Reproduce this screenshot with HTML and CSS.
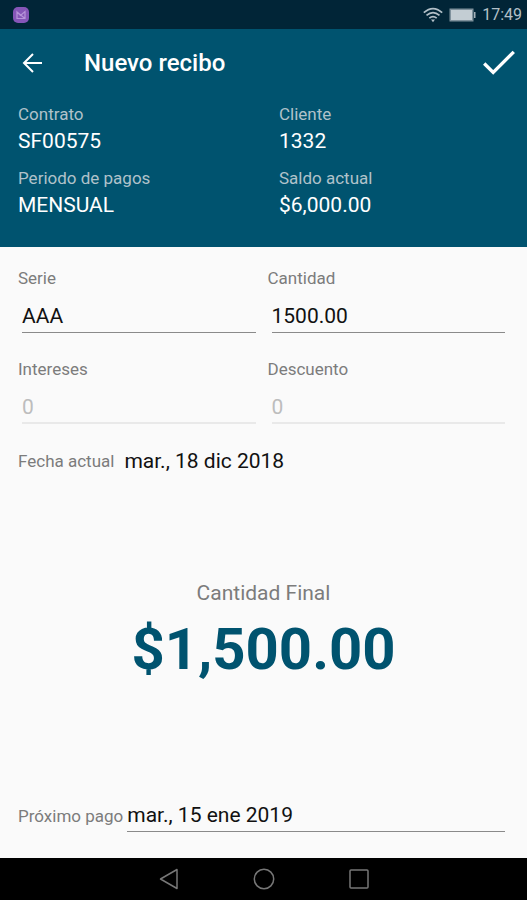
FILE: index.html
```html
<!DOCTYPE html>
<html lang="es">
<head>
<meta charset="utf-8">
<meta name="viewport" content="width=device-width, initial-scale=1">
<title>Nuevo recibo</title>
<link rel="stylesheet" href="styles.css">
</head>
<body>
<div class="status-bar">
  <svg class="status-app" width="16" height="16" viewBox="0 0 16 16" aria-hidden="true">
    <rect width="16" height="16" rx="5" fill="#8656b8"/>
    <path d="M4 11.500V5l3.500 3.500L12 4.500v7zM4 5l8 6.500" fill="none" stroke="#b794da" stroke-width="1.200"/>
  </svg>
  <div class="status-info">
    <svg width="20" height="16" viewBox="0 0 20 16" fill="none" stroke="#b3c0c8" stroke-width="1.700" aria-hidden="true">
      <path d="M.8 5.600Q10-2.500 19.200 5.600M3.500 8.400Q10 2.800 16.500 8.400M6.300 11.100Q10 8 13.700 11.100"/>
      <path d="M8 12.500h4l-2 2.700z" fill="#b3c0c8" stroke="none"/>
    </svg>
    <svg width="27" height="14" viewBox="0 0 27 14" aria-hidden="true">
      <rect x=".5" y=".5" width="24" height="13" fill="#7f919c"/>
      <rect x="2" y="2" width="21" height="10" fill="#c3cdd3"/>
      <rect x="25" y="4" width="1.500" height="6" fill="#a4b1ba"/>
    </svg>
    <time class="clock">17:49</time>
  </div>
</div>
<header class="header">
  <div class="app-bar">
    <button class="icon-button" type="button" aria-label="Volver">
      <svg width="20" height="20" viewBox="0 0 20 20" fill="none" stroke="#fff" stroke-width="2" aria-hidden="true">
        <path d="M20 10H2M11 1L2 10l9 9"/>
      </svg>
    </button>
    <h1 class="title">Nuevo recibo</h1>
    <button class="icon-button" type="submit" form="receipt" aria-label="Guardar">
      <svg width="32" height="26" viewBox="0 0 32 26" fill="none" stroke="#fff" stroke-width="3.300" aria-hidden="true">
        <path d="M1.200 13.500l9 9L30.800 1.800"/>
      </svg>
    </button>
  </div>
  <dl class="summary">
    <div><dt>Contrato</dt><dd>SF00575</dd></div>
    <div><dt>Cliente</dt><dd>1332</dd></div>
    <div><dt>Periodo de pagos</dt><dd>MENSUAL</dd></div>
    <div><dt>Saldo actual</dt><dd>$6,000.00</dd></div>
  </dl>
</header>
<form class="form" id="receipt">
  <div class="fields">
    <div class="field"><label for="serie">Serie</label><input id="serie" type="text" value="AAA"></div>
    <div class="field"><label for="cantidad">Cantidad</label><input id="cantidad" type="text" inputmode="decimal" value="1500.00"></div>
    <div class="field"><label for="intereses">Intereses</label><input id="intereses" type="text" value="0" disabled></div>
    <div class="field"><label for="descuento">Descuento</label><input id="descuento" type="text" value="0" disabled></div>
  </div>
  <div class="today">
    <span class="caption">Fecha actual</span>
    <time datetime="2018-12-18">mar., 18 dic 2018</time>
  </div>
  <div class="total">
    <label class="total-label" for="total">Cantidad Final</label>
    <output class="amount" id="total">$1,500.00</output>
  </div>
  <div class="next">
    <label for="proximo">Próximo pago</label>
    <input id="proximo" type="text" value="mar., 15 ene 2019">
  </div>
</form>
<nav class="nav-bar" aria-label="Sistema">
  <button class="icon-button" type="button" aria-label="Atrás">
    <svg width="20" height="22" viewBox="0 0 20 22" fill="none" stroke="#777" stroke-width="1.500" stroke-linejoin="round" aria-hidden="true"><path d="M18 1.500v19L1.500 11z"/></svg>
  </button>
  <button class="icon-button" type="button" aria-label="Inicio">
    <svg width="22" height="22" viewBox="0 0 22 22" fill="none" stroke="#777" stroke-width="1.500" aria-hidden="true"><circle cx="11" cy="11" r="9.700"/></svg>
  </button>
  <button class="icon-button" type="button" aria-label="Recientes">
    <svg width="20" height="20" viewBox="0 0 20 20" fill="none" stroke="#777" stroke-width="1.500" aria-hidden="true"><rect x="1" y="1" width="18" height="18" rx="1"/></svg>
  </button>
</nav>
</body>
</html>
```

FILE: styles.css
```css
* { box-sizing: border-box; }

body {
  margin: 0;
  min-height: 100vh;
  display: flex;
  flex-direction: column;
  background: #fafafa;
  color: #111;
  font-family: Roboto, "Liberation Sans", sans-serif;
  font-size: 21px;
  line-height: 28px;
}

button, input {
  font: inherit;
  color: inherit;
}

.status-bar {
  display: flex;
  align-items: center;
  justify-content: space-between;
  height: 29px;
  padding: 0 5px 0 13px;
  background: #012537;
}

.status-info {
  display: flex;
  align-items: center;
  gap: 6px;
}

.clock {
  color: #b3c0c8;
  font-size: 16px;
}

.header {
  padding: 0 18px 27px;
  background: #00536f;
  color: #fff;
}

.app-bar {
  display: flex;
  align-items: center;
  height: 68px;
  margin: 0 -6px 0 4px;
}

.icon-button {
  display: flex;
  align-items: center;
  justify-content: center;
  padding: 0;
  border: 0;
  background: none;
}

.title {
  flex: 1;
  margin: 0 0 0 42px;
  font-size: 24px;
  font-weight: 500;
  line-height: 32px;
}

.summary {
  display: grid;
  grid-template-columns: 1fr 1fr;
  gap: 10px 31px;
  margin: 5px 0 0;
}

dt {
  color: #b0c2ca;
  font-size: 17px;
  line-height: 24px;
}

dd {
  margin: 0;
  line-height: 30px;
}

.form {
  flex: 1;
  display: flex;
  flex-direction: column;
  padding: 19px 18px 26px;
}

.form label, .caption {
  color: #7c7c7c;
  font-size: 17px;
  line-height: 24px;
}

.fields {
  display: grid;
  grid-template-columns: repeat(2, minmax(0, 1fr));
  gap: 24px 8px;
}

.field {
  display: flex;
  flex-direction: column;
  gap: 10px;
}

.field input {
  margin: 0 4px;
}

.form input {
  min-width: 0;
  height: 33px;
  padding: 0;
  border: 0;
  border-bottom: 1px solid #8a8a8a;
  border-radius: 0;
  background: none;
}

.form input:disabled {
  color: #bdbdbd;
  border-bottom: 2px solid #e9e9e9;
}

.today {
  display: flex;
  align-items: center;
  gap: 10px;
  margin-top: 23px;
}

.total {
  flex: 1;
  display: flex;
  flex-direction: column;
  align-items: center;
  justify-content: center;
  padding-bottom: 8px;
}

.form .total-label {
  font-size: 21px;
  line-height: 32px;
}

.amount {
  color: #00536f;
  font-size: 58px;
  font-weight: 700;
  line-height: 80px;
}

.next {
  display: flex;
  align-items: center;
  gap: 4px;
  padding-right: 4px;
}

.next input {
  flex: 1;
}

.nav-bar {
  display: flex;
  align-items: center;
  justify-content: center;
  gap: 74px;
  height: 42px;
  background: #000;
}
```
